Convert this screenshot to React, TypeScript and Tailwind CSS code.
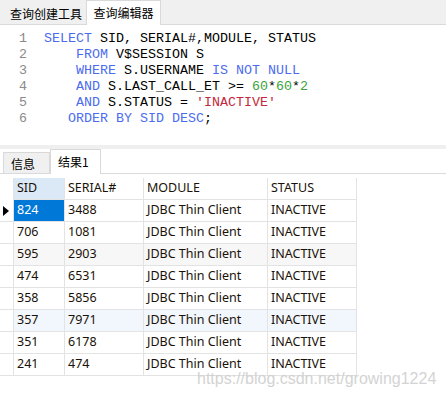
import React from "react";

const KW = "text-[#4c6cf0]";
const NUM = "text-[#3aa33a]";
const STR = "text-[#c4283c]";

type Seg = [string, string?];

const code: Seg[][] = [
  [["SELECT", KW], [" SID, SERIAL#,MODULE, STATUS"]],
  [["    "], ["FROM", KW], [" V$SESSION S"]],
  [["    "], ["WHERE", KW], [" S.USERNAME "], ["IS NOT NULL", KW]],
  [["    "], ["AND", KW], [" S.LAST_CALL_ET >= "], ["60", NUM], ["*"], ["60", NUM], ["*"], ["2", NUM]],
  [["    "], ["AND", KW], [" S.STATUS = "], ["'INACTIVE'", STR]],
  [["   "], ["ORDER BY SID DESC", KW], [";"]],
];

const rows: [string, string][] = [
  ["824", "3488"],
  ["706", "1081"],
  ["595", "2903"],
  ["474", "6531"],
  ["358", "5856"],
  ["357", "7971"],
  ["351", "6178"],
  ["241", "474"],
];

const cjk = { fontFamily: '"Noto Sans CJK SC", "Noto Sans", sans-serif' };
const grid = "grid grid-cols-[14px_51px_79px_124px_89px]";

export default function App() {
  return (
    <div className="relative w-[446px] h-[397px] overflow-hidden bg-white">
      {/* top tabs */}
      <div className="flex h-[25px] bg-[#f0f0f0] border-b border-[#dadada] text-[12px] text-black" style={cjk}>
        <div className="pl-[10px] pr-[4px] flex items-center h-[24px] pt-[3px] w-[86px]">查询创建工具</div>
        <div className="h-[25px] w-[75px] bg-white border border-[#d9d9d9] border-b-0 flex items-center justify-center -mb-px">
          查询编辑器
        </div>
      </div>
      {/* editor */}
      <div
        className="h-[120px] pt-[6px] text-[13.33px] leading-[16px] text-black"
        style={{ fontFamily: '"Liberation Mono", monospace' }}
      >
        {code.map((line, i) => (
          <div key={i} className="flex h-[16px] whitespace-pre">
            <div className="w-[44px] pl-[19px] text-[#8a8a8a]">{i + 1}</div>
            <div>
              {line.map(([t, c], j) => (
                <span key={j} className={c ?? ""}>
                  {t}
                </span>
              ))}
            </div>
          </div>
        ))}
      </div>
      {/* separator */}
      <div className="h-[4px] bg-[#efefef]" />
      {/* bottom tabs */}
      <div className="flex items-end h-[25px] border-b border-[#dadada] text-[12px] text-black" style={cjk}>
        <div className="ml-[3px] w-[47px] h-[21px] bg-[#f0f0f0] border border-[#d9d9d9] border-b-0 flex items-center pl-[7px] pt-[1px]">
          信息
        </div>
        <div className="w-[51px] h-[25px] bg-white border border-[#d9d9d9] border-b-0 -mb-px flex items-center pl-[7px]">
          结果1
        </div>
      </div>
      {/* table */}
      <div className="pt-[4px] text-[12.5px] text-[#1a1208]" style={{ fontFamily: '"Noto Sans", sans-serif' }}>
        <div className={`${grid} h-[22px]`}>
          <div className="border-r border-[#e3e3e3]" />
          <div className="bg-[#dbe9f7] border-r border-b border-[#e3e3e3] pl-[3px] flex items-center">SID</div>
          <div className="border-r border-b border-[#e3e3e3] pl-[3px] flex items-center">SERIAL#</div>
          <div className="border-r border-b border-[#e3e3e3] pl-[3px] flex items-center">MODULE</div>
          <div className="border-r border-b border-[#e3e3e3] pl-[3px] flex items-center">STATUS</div>
        </div>
        {rows.map(([sid, ser], i) => {
          const bg = i === 2 ? "bg-[#f7f7f7]" : i === 5 ? "bg-[#f2f7fd]" : "bg-white";
          return (
            <div key={i} className={`${grid} h-[22px]`}>
              <div className="border-r border-b border-[#e3e3e3] flex items-center justify-start pl-[3px]">
                {i === 0 && (
                  <svg width="6" height="10" viewBox="0 0 6 10">
                    <path d="M0 0 L6 5 L0 10 Z" fill="#000" />
                  </svg>
                )}
              </div>
              <div
                className={`${i === 0 ? "bg-[#0078d7] text-white" : bg} border-r border-b border-[#e3e3e3] pl-[3px] flex items-center`}
              >
                {sid}
              </div>
              <div className={`${bg} border-r border-b border-[#e3e3e3] pl-[3px] flex items-center`}>{ser}</div>
              <div className={`${bg} border-r border-b border-[#e3e3e3] pl-[3px] flex items-center`}>JDBC Thin Client</div>
              <div className={`${bg} border-r border-b border-[#e3e3e3] pl-[3px] flex items-center`}>INACTIVE</div>
            </div>
          );
        })}
      </div>
      {/* watermark */}
      <div
        className="absolute left-[197px] top-[369px] text-[16px] leading-[20px] text-[#cfcfcf] opacity-90 whitespace-nowrap"
        style={{ fontFamily: '"Liberation Sans", sans-serif' }}
      >
        https://blog.csdn.net/growing1224
      </div>
    </div>
  );
}
